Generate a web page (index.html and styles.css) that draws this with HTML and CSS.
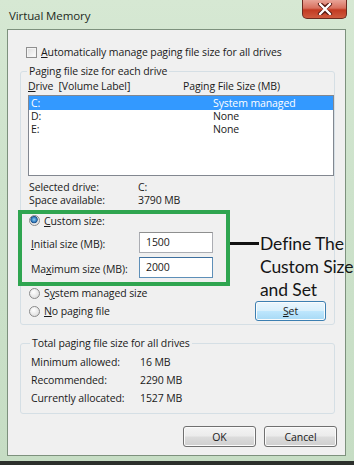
FILE: index.html
```html
<!DOCTYPE html>
<html>
<head>
<meta charset="utf-8">
<title>Virtual Memory</title>
<link rel="stylesheet" href="styles.css">
</head>
<body>
<div class="window">
  <div class="titlebar">
    <span class="title">Virtual Memory</span>
    <div class="close">
      <svg width="16" height="12" viewBox="0 0 16 12">
        <path d="M3 1 L8 5 L13 1 M3 11 L8 7 L13 11" stroke="#5a1a12" stroke-width="4.2" fill="none" stroke-linecap="round"/>
        <path d="M3 1 L13 11 M13 1 L3 11" stroke="#ffffff" stroke-width="2.4" fill="none" stroke-linecap="round"/>
      </svg>
    </div>
  </div>
  <div class="client">
    <div class="check-row"><span class="checkbox"></span><span><u>A</u>utomatically manage paging file size for all drives</span></div>

    <fieldset class="group group1">
      <legend>Paging file size for each drive</legend>
      <div class="list-head"><span class="c1"><u>D</u>rive&nbsp; [Volume Label]</span><span class="c2">Paging File Size (MB)</span></div>
      <div class="listbox">
        <div class="row selected"><span class="c1">C:</span><span class="c2">System managed</span></div>
        <div class="row"><span class="c1">D:</span><span class="c2">None</span></div>
        <div class="row"><span class="c1">E:</span><span class="c2">None</span></div>
      </div>
      <div class="info">
        <span>Selected drive:</span><span>C:</span>
        <span>Space available:</span><span>3790 MB</span>
      </div>
      <div class="radio-row first"><span class="radio checked"></span><span><u>C</u>ustom size:</span></div>
      <div class="field-row"><span class="flabel"><u>I</u>nitial size (MB):</span><span class="input">1500</span></div>
      <div class="field-row"><span class="flabel">Ma<u>x</u>imum size (MB):</span><span class="input focus">2000</span></div>
      <div class="bottom-row">
        <div class="radios">
          <div class="radio-row"><span class="radio"></span><span>S<u>y</u>stem managed size</span></div>
          <div class="radio-row"><span class="radio"></span><span><u>N</u>o paging file</span></div>
        </div>
        <div class="btn btn-set"><u>S</u>et</div>
      </div>
    </fieldset>

    <fieldset class="group group2">
      <legend>Total paging file size for all drives</legend>
      <div class="totals">
        <span>Minimum allowed:</span><span>16 MB</span>
        <span>Recommended:</span><span>2290 MB</span>
        <span>Currently allocated:</span><span>1527 MB</span>
      </div>
    </fieldset>

    <div class="buttons">
      <div class="btn">OK</div>
      <div class="btn">Cancel</div>
    </div>
  </div>

  <div class="annot-box"></div>
  <div class="annot-line"></div>
  <div class="annot-text">Define The<br>Custom Size<br>and Set</div>
</div>
</body>
</html>
```

FILE: styles.css
```css
html, body {
  margin: 0;
  padding: 0;
  background: #cfe2cf;
}

.window {
  position: relative;
  width: 354px;
  height: 465px;
  overflow: hidden;
  box-sizing: border-box;
  padding: 0 8px 0 7px;
  background: linear-gradient(180deg, #d6e8d3 0%, #cde2cb 40%, #c6ddc4 100%);
  border-bottom: 4px solid #2c302c;
  font-family: "Open Sans", "DejaVu Sans", sans-serif;
  font-size: 10.5px;
  letter-spacing: -0.1px;
  color: #1a1a1a;
}

.titlebar {
  height: 29px;
  display: flex;
  align-items: center;
  position: relative;
}

.title {
  margin-left: 2px;
  margin-top: 1px;
  font-size: 11.5px;
  color: #1e2a1e;
}

.close {
  position: absolute;
  top: 0;
  right: -1px;
  width: 45px;
  height: 19px;
  box-sizing: border-box;
  border: 1px solid #6b2a20;
  border-top: none;
  border-radius: 0 0 5px 5px;
  background: linear-gradient(180deg, #e9a497 0%, #d8705e 45%, #c23a22 55%, #cf5a3e 100%);
  display: flex;
  align-items: center;
  justify-content: center;
}

.client {
  height: 427px;
  box-sizing: border-box;
  border: 1px solid #7d917d;
  background: #f0f0f0;
  padding: 15px 10px 0 12px;
  display: flex;
  flex-direction: column;
}

u { text-decoration: underline; text-underline-offset: 1px; }

.check-row {
  display: flex;
  align-items: center;
  height: 14px;
  padding-left: 6px;
  gap: 4px;
}

.checkbox {
  width: 11px;
  height: 11px;
  box-sizing: border-box;
  border: 1px solid #8f8f8f;
  background: linear-gradient(135deg, #dcdcdc 0%, #f4f4f4 70%, #ffffff 100%);
  box-shadow: inset 0 0 0 1px #f4f4f4;
}

.group {
  margin: 0;
  border: 1px solid #d5dfe5;
  border-radius: 3px;
  min-width: 0;
}

.group legend {
  padding: 0 2px;
  margin-left: -1px;
  line-height: 14px;
  height: 14px;
}

.group1 {
  margin-top: 5px;
  padding: 2px 0 3px 7px;
}

.list-head {
  display: flex;
  height: 13px;
  line-height: 13px;
}

.list-head .c1 { width: 155px; }

.listbox {
  margin-top: 2px;
  height: 81px;
  box-sizing: border-box;
  border: 1px solid #828790;
  background: #ffffff;
  padding-top: 1px;
}

.row {
  display: flex;
  height: 13px;
  line-height: 13px;
  padding-left: 2px;
}

.row .c1 { width: 182px; }

.row.selected {
  background: #3399ff;
  color: #ffffff;
  height: 14px;
  line-height: 14px;
  margin-top: -1px;
}

.info {
  margin-top: 5px;
  display: grid;
  grid-template-columns: 109px auto;
  grid-auto-rows: 13px;
  line-height: 13px;
  padding-left: 1px;
}

.radio-row {
  display: flex;
  align-items: center;
  gap: 4px;
  height: 18px;
  padding-left: 1px;
}

.radio-row.first {
  margin-top: 6px;
  height: 15px;
}

.radio {
  width: 11px;
  height: 11px;
  box-sizing: border-box;
  border-radius: 50%;
  border: 1px solid #8a8a8a;
  background: radial-gradient(circle at 40% 35%, #ffffff 0%, #e2e2e2 70%, #cfcfcf 100%);
}

.radio.checked {
  background: radial-gradient(circle at 45% 40%, #8fd0f5 0%, #2d77b8 35%, #1f4f86 45%, #e4e4e4 55%, #f2f2f2 100%);
}

.field-row {
  display: flex;
  align-items: center;
  height: 21px;
  margin-top: 4px;
  padding-left: 3px;
}

.field-row:first-of-type { margin-top: 0; }

.flabel { width: 108px; padding-top: 2px; }

.input {
  width: 74px;
  height: 21px;
  box-sizing: border-box;
  border: 1px solid #abadb3;
  border-top-color: #8e8f8f;
  background: #ffffff;
  padding-left: 6px;
  line-height: 19px;
}

.input.focus {
  border-color: #5e8fb8;
  border-top-color: #3d6f9e;
}

.bottom-row {
  margin-top: 6px;
  display: flex;
  justify-content: space-between;
  align-items: flex-start;
  padding-right: 8px;
}

.btn {
  width: 73px;
  height: 21px;
  box-sizing: border-box;
  border: 1px solid #707070;
  border-radius: 3px;
  background: linear-gradient(180deg, #f4f4f4 0%, #ebebeb 48%, #dcdcdc 52%, #cfcfcf 100%);
  box-shadow: inset 0 0 0 1px #fbfbfb;
  display: flex;
  align-items: center;
  justify-content: center;
  color: #1a1a1a;
}

.btn-set {
  width: 71px;
  height: 20px;
  margin-top: 17px;
  border-color: #3c7fb1;
  background: linear-gradient(180deg, #eaf6fd 0%, #d9f0fc 48%, #bee6fd 52%, #a7d9f5 100%);
}

.group2 {
  margin-top: 11px;
  padding: 3px 0 6px 10px;
}

.totals {
  display: grid;
  grid-template-columns: 109px auto;
  grid-auto-rows: 18px;
  line-height: 18px;
}

.buttons {
  margin-top: 12px;
  margin-right: -2px;
  display: flex;
  justify-content: flex-end;
  gap: 8px;
}

.annot-box {
  position: absolute;
  left: 18px;
  top: 210px;
  width: 212px;
  height: 76px;
  box-sizing: border-box;
  border: 4px solid #2fa550;
}

.annot-line {
  position: absolute;
  left: 230px;
  top: 242px;
  width: 29px;
  height: 3px;
  background: #111111;
}

.annot-text {
  position: absolute;
  left: 260px;
  top: 232px;
  font-family: "Lato", "Open Sans", sans-serif;
  font-size: 17.5px;
  letter-spacing: -0.1px;
  line-height: 23px;
  color: #151515;
  white-space: nowrap;
}
```
